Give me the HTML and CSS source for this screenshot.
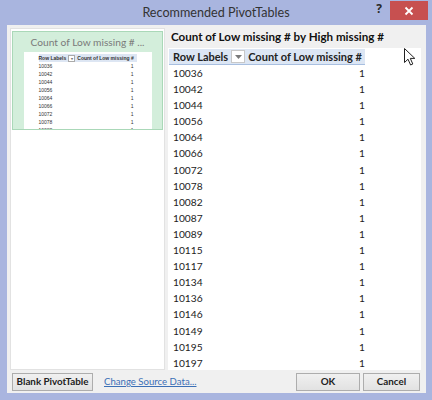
FILE: index.html
```html
<!DOCTYPE html>
<html>
<head>
<meta charset="utf-8">
<link rel="stylesheet" href="styles.css">
</head>
<body>
<div class="window">
  <div class="titlebar">
    <div></div>
    <div class="title">Recommended PivotTables</div>
    <div class="controls">
      <span class="help">?</span>
      <span class="close"><svg width="10" height="10" viewBox="0 0 10 10"><path d="M1.5 1.5L8.5 8.5M8.5 1.5L1.5 8.5" stroke="#fff" stroke-width="1.8"/></svg></span>
    </div>
  </div>
  <div class="content">
    <div class="main">
      <div class="left">
        <div class="thumb">
          <div class="thumb-title">Count of Low missing # ...</div>
          <div class="mini">
            <div class="mini-head"><span class="mh1">Row Labels</span><span class="mdd">▾</span><span class="mh2">Count of Low missing #</span></div>
            <div class="mini-row"><span>10036</span><span>1</span></div>
            <div class="mini-row"><span>10042</span><span>1</span></div>
            <div class="mini-row"><span>10044</span><span>1</span></div>
            <div class="mini-row"><span>10056</span><span>1</span></div>
            <div class="mini-row"><span>10064</span><span>1</span></div>
            <div class="mini-row"><span>10066</span><span>1</span></div>
            <div class="mini-row"><span>10072</span><span>1</span></div>
            <div class="mini-row"><span>10078</span><span>1</span></div>
            <div class="mini-row"><span>10082</span><span>1</span></div>
          </div>
        </div>
      </div>
      <div class="right">
        <div class="heading">Count of Low missing # by High missing #</div>
        <div class="table">
          <div class="thead">
            <span class="th1">Row Labels</span>
            <span class="dd"><svg width="7" height="4" viewBox="0 0 7 4"><path d="M0 0H7L3.5 4Z" fill="#7a7a7a"/></svg></span>
            <span class="th2">Count of Low missing #</span>
          </div>
          <div class="row"><span>10036</span><span>1</span></div>
          <div class="row"><span>10042</span><span>1</span></div>
          <div class="row"><span>10044</span><span>1</span></div>
          <div class="row"><span>10056</span><span>1</span></div>
          <div class="row"><span>10064</span><span>1</span></div>
          <div class="row"><span>10066</span><span>1</span></div>
          <div class="row"><span>10072</span><span>1</span></div>
          <div class="row"><span>10078</span><span>1</span></div>
          <div class="row"><span>10082</span><span>1</span></div>
          <div class="row"><span>10087</span><span>1</span></div>
          <div class="row"><span>10089</span><span>1</span></div>
          <div class="row"><span>10115</span><span>1</span></div>
          <div class="row"><span>10117</span><span>1</span></div>
          <div class="row"><span>10134</span><span>1</span></div>
          <div class="row"><span>10136</span><span>1</span></div>
          <div class="row"><span>10146</span><span>1</span></div>
          <div class="row"><span>10149</span><span>1</span></div>
          <div class="row"><span>10195</span><span>1</span></div>
          <div class="row"><span>10197</span><span>1</span></div>
          <svg class="cursor" width="12" height="18" viewBox="0 0 12 18"><path d="M0.5 0.5V14.5L4 11.2L6.6 17L8.8 16L6.3 10.4H10.8Z" fill="#fff" stroke="#222" stroke-width="1"/></svg>
        </div>
      </div>
    </div>
    <div class="footer">
      <button class="btn blank">Blank PivotTable</button>
      <a class="link">Change Source Data...</a>
      <div class="spacer"></div>
      <button class="btn ok">OK</button>
      <button class="btn cancel">Cancel</button>
    </div>
  </div>
</div>
</body>
</html>
```
FILE: styles.css
```css
html, body {
  margin: 0;
  padding: 0;
}
body {
  width: 432px;
  height: 400px;
  overflow: hidden;
  background: #a9b5df;
  font-family: "Lato", "Open Sans", sans-serif;
  white-space: nowrap;
}
.window {
  display: flex;
  flex-direction: column;
  height: 400px;
}
.titlebar {
  height: 25px;
  flex: none;
  display: grid;
  grid-template-columns: 1fr auto 1fr;
  align-items: start;
}
.title {
  font-size: 12.6px;
  color: #333;
  line-height: 26px;
}
.controls {
  display: flex;
  justify-content: flex-end;
  align-items: flex-start;
  padding-right: 4px;
}
.help {
  font-family: "Open Sans", sans-serif;
  font-size: 12px;
  font-weight: 700;
  color: #2a2a2a;
  line-height: 18px;
  margin-right: 8px;
}
.close {
  width: 38px;
  height: 19px;
  margin-top: 1px;
  background: #c75050;
  display: flex;
  align-items: center;
  justify-content: center;
}
.content {
  flex: none;
  height: 368px;
  margin: 0 6px 0 7px;
  background: #f0f0f0;
  display: flex;
  flex-direction: column;
  padding: 3px 0 0 3px;
  box-sizing: border-box;
}
.main {
  height: 342px;
  flex: none;
  display: flex;
  gap: 3px;
}
.left {
  width: 151px;
  background: #fff;
  border: 1px solid #e2e2e2;
  padding: 2px 1px;
}
.thumb {
  height: 97px;
  background: #d3eedb;
  border: 1px solid #aad8b8;
  overflow: hidden;
  display: flex;
  flex-direction: column;
  align-items: center;
}
.thumb-title {
  font-size: 10.2px;
  color: #7a7a7a;
  line-height: 14px;
  margin-top: 3px;
}
.mini {
  margin-top: 3px;
  width: 128px;
  flex: 1;
  background: #fff;
  padding: 2px 0 0 15px;
  box-sizing: border-box;
  font-family: "Liberation Sans", sans-serif;
  font-size: 5px;
  color: #333;
}
.mini-head {
  width: 98px;
  height: 8px;
  background: #dde6f3;
  display: flex;
  align-items: center;
  font-weight: 700;
  font-size: 5px;
  line-height: 8px;
}
.mdd {
  margin: 0 2px;
  width: 5px;
  height: 5px;
  background: #fff;
  border: 0.5px solid #aaa;
  font-size: 4px;
  line-height: 5px;
  text-align: center;
  color: #777;
}
.mini-row {
  width: 95px;
  height: 8px;
  line-height: 8px;
  display: flex;
  justify-content: space-between;
}
.right {
  flex: 1;
  display: flex;
  flex-direction: column;
  margin-right: 5px;
}
.heading {
  height: 20px;
  line-height: 18px;
  padding-left: 3px;
  font-family: "Lato", sans-serif;
  font-weight: 700;
  font-size: 11.6px;
  color: #111;
}
.table {
  flex: 1;
  background: #fff;
  overflow: hidden;
  position: relative;
  font-family: "Lato", sans-serif;
  font-size: 10.2px;
  color: #222;
  padding-left: 1px;
}
.thead {
  width: 196px;
  height: 15px;
  background: #dce6f4;
  border-bottom: 1px solid #a8bfe0;
  display: flex;
  align-items: center;
  font-weight: 700;
  font-size: 11px;
  margin-top: 1px;
}
.th1 {
  padding-left: 4px;
}
.dd {
  width: 12px;
  height: 11px;
  margin: 0 3px;
  background: #fff;
  border: 1px solid #c8c8c8;
  display: flex;
  align-items: center;
  justify-content: center;
  flex: none;
}
.row {
  width: 192px;
  height: 16.1px;
  line-height: 16px;
  display: flex;
  justify-content: space-between;
  padding-left: 4px;
}
.cursor {
  position: absolute;
  left: 236px;
  top: 0px;
}
.footer {
  flex: 1;
  display: flex;
  align-items: center;
  padding-right: 6px;
}
.btn {
  font-family: "Lato", sans-serif;
  font-size: 9.8px;
  font-weight: 700;
  color: #222;
  background: linear-gradient(#f0f0f0, #e2e2e2);
  border: 1px solid #adadad;
  height: 18px;
  padding: 0;
  line-height: 15px;
  white-space: nowrap;
}
.blank {
  width: 81px;
  margin-left: 2px;
}
.link {
  margin-left: 11px;
  font-size: 9.6px;
  color: #3b6fb6;
  text-decoration: underline;
}
.spacer {
  flex: 1;
}
.ok {
  width: 64px;
}
.cancel {
  width: 57px;
  margin-left: 3px;
}
```
